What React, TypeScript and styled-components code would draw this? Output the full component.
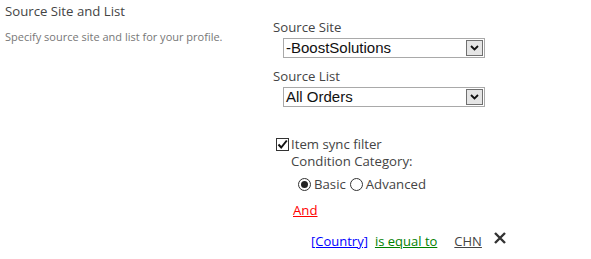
import React from "react";
import styled, { createGlobalStyle } from "styled-components";

const Global = createGlobalStyle`
  html, body { margin: 0; padding: 0; background: #fff; }
  body { font-family: "Segoe UI", "Open Sans", "Noto Sans", sans-serif; }
`;

const Page = styled.div`
  display: flex;
  width: 591px;
  height: 259px;
  overflow: hidden;
`;

const InfoColumn = styled.div`
  width: 273px;
  flex-shrink: 0;
  padding: 3px 0 0 5px;
  box-sizing: border-box;
`;

const SectionTitle = styled.div`
  font-size: 13.2px;
  line-height: 17px;
  color: #444;
`;

const SectionDesc = styled.div`
  margin-top: 10px;
  font-size: 11px;
  line-height: 14px;
  color: #777;
`;

const FieldColumn = styled.div`
  display: flex;
  flex-direction: column;
  padding-top: 19px;
`;

const FieldLabel = styled.div`
  font-size: 13.2px;
  line-height: 17px;
  color: #444;
`;

const SelectBox = styled.div`
  margin: 2px 0 0 10px;
  width: 202px;
  height: 20px;
  box-sizing: border-box;
  border: 1px solid #a9a9a9;
  display: flex;
  align-items: stretch;
  background: #fff;
  & + ${FieldLabel} { margin-top: 10px; }
`;

const SelectValue = styled.div`
  flex: 1;
  padding-left: 2px;
  font-family: "Liberation Sans", Arial, sans-serif;
  font-size: 15px;
  line-height: 18px;
  color: #111;
`;

const ArrowButton = styled.div`
  width: 17px;
  margin: 1px;
  box-sizing: border-box;
  border: 1px solid #707070;
  background: #e5e5e5;
  display: flex;
  align-items: center;
  justify-content: center;
`;

const CheckRow = styled.div`
  display: flex;
  align-items: center;
  margin: 29px 0 0 3px;
  font-size: 13.2px;
  line-height: 17px;
  color: #444;
`;

const CheckBox = styled.div`
  width: 13px;
  height: 13px;
  box-sizing: border-box;
  border: 1px solid #333;
  margin-right: 2px;
  display: flex;
  align-items: center;
  justify-content: center;
`;

const Filter = styled.div`
  display: flex;
  flex-direction: column;
  padding-left: 18px;
`;

const SubLabel = styled.div`
  margin-top: 0;
  font-size: 13.2px;
  line-height: 17px;
  color: #444;
`;

const RadioGroup = styled.div`
  display: flex;
  align-items: center;
  margin: 6px 0 0 7px;
  font-size: 13.2px;
  line-height: 17px;
  color: #444;
`;

const RadioOption = styled.label`
  display: flex;
  align-items: center;
  margin-right: 4px;
`;

const Radio = styled.span<{ $checked?: boolean }>`
  width: 13px;
  height: 13px;
  box-sizing: border-box;
  border: 1px solid #333;
  border-radius: 50%;
  margin-right: 3px;
  display: flex;
  align-items: center;
  justify-content: center;
  &::after {
    content: "";
    display: ${(p) => (p.$checked ? "block" : "none")};
    width: 7px;
    height: 7px;
    border-radius: 50%;
    background: #222;
  }
`;

const Joiner = styled.a`
  margin: 9px 0 0 2px;
  font-size: 13.2px;
  line-height: 17px;
  color: #ff0000;
  text-decoration: underline;
  align-self: flex-start;
`;

const ConditionRow = styled.div`
  display: flex;
  align-items: center;
  margin: 14px 0 0 20px;
  font-size: 13px;
  line-height: 17px;
`;

const Token = styled.a<{ $color: string; $gap: number }>`
  color: ${(p) => p.$color};
  text-decoration: underline;
  margin-right: ${(p) => p.$gap}px;
`;

const RemoveIcon = styled.svg`
  margin-top: -8px;
`;

const Chevron = () => (
  <svg width="9" height="6" viewBox="0 0 9 6">
    <path d="M1 1 L4.5 4.5 L8 1" fill="none" stroke="#111" strokeWidth="1.8" />
  </svg>
);

export default function App() {
  return (
    <>
      <Global />
      <Page>
        <InfoColumn>
          <SectionTitle>Source Site and List</SectionTitle>
          <SectionDesc>Specify source site and list for your profile.</SectionDesc>
        </InfoColumn>
        <FieldColumn>
          <FieldLabel>Source Site</FieldLabel>
          <SelectBox>
            <SelectValue>-BoostSolutions</SelectValue>
            <ArrowButton>
              <Chevron />
            </ArrowButton>
          </SelectBox>
          <FieldLabel>Source List</FieldLabel>
          <SelectBox>
            <SelectValue>All Orders</SelectValue>
            <ArrowButton>
              <Chevron />
            </ArrowButton>
          </SelectBox>
          <CheckRow>
            <CheckBox>
              <svg width="11" height="11" viewBox="0 0 11 11">
                <path d="M1.5 5.5 L4.2 8.5 L9.8 1.5" fill="none" stroke="#111" strokeWidth="2" />
              </svg>
            </CheckBox>
            Item sync filter
          </CheckRow>
          <Filter>
            <SubLabel>Condition Category:</SubLabel>
            <RadioGroup>
              <RadioOption>
                <Radio $checked />
                Basic
              </RadioOption>
              <RadioOption>
                <Radio />
                Advanced
              </RadioOption>
            </RadioGroup>
            <Joiner>And</Joiner>
            <ConditionRow>
              <Token $color="#0000ff" $gap={7}>[Country]</Token>
              <Token $color="#008000" $gap={17}>is equal to</Token>
              <Token $color="#444" $gap={11}>CHN</Token>
              <RemoveIcon width="14" height="14" viewBox="0 0 14 14">
                <path d="M2 2 L12 12 M12 2 L2 12" stroke="#333" strokeWidth="2.4" />
              </RemoveIcon>
            </ConditionRow>
          </Filter>
        </FieldColumn>
      </Page>
    </>
  );
}
